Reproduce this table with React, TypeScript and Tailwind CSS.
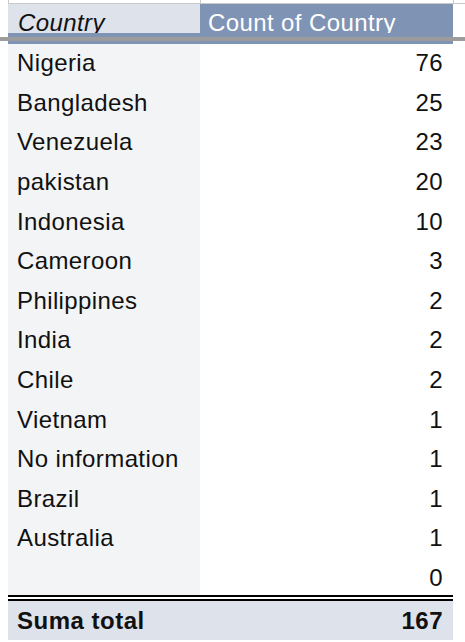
import React from "react";

const rows: [string, string][] = [
  ["Nigeria", "76"],
  ["Bangladesh", "25"],
  ["Venezuela", "23"],
  ["pakistan", "20"],
  ["Indonesia", "10"],
  ["Cameroon", "3"],
  ["Philippines", "2"],
  ["India", "2"],
  ["Chile", "2"],
  ["Vietnam", "1"],
  ["No information", "1"],
  ["Brazil", "1"],
  ["Australia", "1"],
  ["", "0"],
];

export default function App() {
  return (
    <div
      className="w-[465px] h-[642px] bg-white text-[#111] overflow-hidden tracking-[0.4px]"
      style={{ fontFamily: '"Liberation Sans", Arial, sans-serif' }}
    >
      {/* top gridline strip */}
      <div className="flex h-[4px]">
        <div className="w-[8px]" />
        <div className="w-[192px] border-l border-b border-[#c9c9c9]" />
        <div className="w-[253px] border-l border-b border-[#c9c9c9]" />
        <div className="flex-1 border-l border-b border-[#c9c9c9]" />
      </div>
      {/* header */}
      <div className="relative">
        <div className="flex h-[29px] ml-[8px] w-[445px]">
          <div className="w-[192px] bg-[#dee2eb] overflow-hidden pl-[10px]">
            <div className="text-[24px] leading-[29px] italic pt-[4px]">Country</div>
          </div>
          <div className="flex-1 bg-[#7f93b5] overflow-hidden pl-[8px]">
            <div className="text-[24px] leading-[29px] text-white pt-[4px]">Count of Country</div>
          </div>
        </div>
        <div className="ml-[8px] w-[445px] h-[11px] bg-[#7f93b5]" />
        <div className="absolute left-0 right-0 top-[33px] h-[4px] bg-[#9c9c9c]" />
      </div>
      {/* rows */}
      <div className="ml-[8px] w-[445px] h-[551px] overflow-hidden">
        {rows.map(([c, n], i) => (
          <div key={i} className="flex h-[39.6px] text-[24px]">
            <div className="w-[192px] bg-[#f3f4f6] pl-[9px] flex items-center pb-[1px]">{c}</div>
            <div className="flex-1 bg-white pr-[10px] flex items-center justify-end pb-[1px]">{n}</div>
          </div>
        ))}
      </div>
      {/* total */}
      <div className="ml-[8px] w-[445px] border-t-[6px] border-double border-black">
        <div className="flex h-[39px] bg-[#dee2eb] text-[24px] font-bold items-center tracking-[0.5px]">
          <div className="w-[192px] pl-[9px]">Suma total</div>
          <div className="flex-1 pr-[10px] text-right">167</div>
        </div>
      </div>
    </div>
  );
}
